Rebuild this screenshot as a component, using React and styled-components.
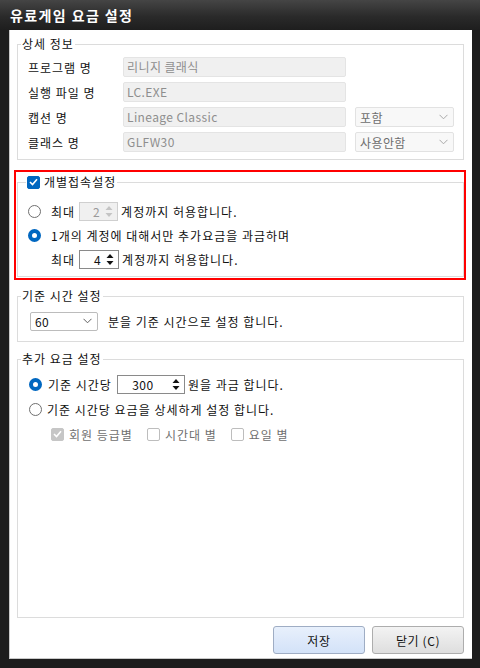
import React from 'react'
import styled, { createGlobalStyle } from 'styled-components'

const GlobalStyle = createGlobalStyle`
  html, body { margin: 0; padding: 0; background: #1d1d1d; }
  body {
    font-family: "Noto Sans CJK KR", "Noto Sans", sans-serif;
    font-size: 12px;
    letter-spacing: 1px;
    color: #111;
  }
  * { box-sizing: border-box; }
`

const Frame = styled.div`
  width: 480px;
  height: 668px;
  display: flex;
  flex-direction: column;
  background: #1d1d1d;
`

const TitleBar = styled.div`
  height: 30px;
  flex: none;
  display: flex;
  align-items: center;
  padding-left: 10px;
  background: linear-gradient(#454545, #2a2a2a 55%, #1e1e1e);
  color: #fff;
  font-size: 14px;
  font-weight: bold;
  letter-spacing: 1.4px;
`

const Client = styled.div`
  flex: 1;
  margin: 0 8px 9px 9px;
  background: #fff;
  border-left: 1px solid #c9c9c9;
  border-bottom: 1px solid #c9c9c9;
  display: flex;
  flex-direction: column;
  padding: 6px 8px 4px 7px;
`

const Group = styled.fieldset`
  margin: ${p => p.$mt || 0}px 0 0;
  padding: 0;
  min-width: 0;
  border: 1px solid #dcdcdc;
  flex: ${p => (p.$grow ? 1 : 'none')};
  display: block;
`

const Legend = styled.legend`
  margin-left: ${p => p.$ml || 3}px;
  padding: 0 1px;
  line-height: 16px;
  height: 16px;
  display: flex;
  align-items: center;
  gap: 4px;
  color: #111;
`

const Body = styled.div`
  display: flex;
  flex-direction: column;
  gap: ${p => p.$gap}px;
  padding: ${p => p.$pad};
`

const Row = styled.div`
  height: 20px;
  display: flex;
  align-items: center;
  padding-left: ${p => p.$indent || 0}px;
  white-space: nowrap;
`

const Label = styled.span`
  width: 95px;
  flex: none;
`

const Text = styled.span`
  margin-left: ${p => p.$ml || 0}px;
  color: ${p => (p.$dim ? '#707070' : '#111')};
`

const ReadOnly = styled.div`
  width: ${p => p.$w}px;
  height: 20px;
  background: #f0f0f0;
  border: 1px solid #e4e4e4;
  border-radius: 2px;
  color: #8e8e8e;
  padding-left: 3px;
  line-height: 18px;
  letter-spacing: 0.4px;
`

const Combo = styled.div`
  width: ${p => p.$w}px;
  height: ${p => p.$h || 20}px;
  margin-left: ${p => p.$ml || 0}px;
  border: 1px solid ${p => (p.$off ? '#e2e2e2' : '#bcbcbc')};
  border-radius: 2px;
  background: ${p => (p.$off ? '#f8f8f8' : '#fff')};
  color: ${p => (p.$off ? '#6e6e6e' : '#111')};
  display: flex;
  align-items: center;
  justify-content: space-between;
  padding: 0 5px 0 4px;
  letter-spacing: 0.4px;
`

const Spin = styled.div`
  width: ${p => p.$w}px;
  height: 19px;
  margin: 0 3px 0 ${p => p.$ml || 0}px;
  border: 1px solid ${p => (p.$off ? '#cfcfcf' : '#8a8a8a')};
  background: ${p => (p.$off ? '#f0f0f0' : '#fff')};
  color: ${p => (p.$off ? '#9a9a9a' : '#111')};
  display: flex;
  align-items: center;
  padding-right: 4px;
  letter-spacing: 0.4px;
`

const SpinValue = styled.span`
  flex: 1;
  text-align: ${p => p.$align || 'right'};
  padding-right: ${p => p.$pr || 4}px;
`

const Radio = styled.span`
  width: 13px;
  height: 13px;
  flex: none;
  border-radius: 50%;
  margin-right: ${p => p.$mr}px;
  border: ${p => (p.$on ? '4px solid #0067c0' : '1px solid #6f6f6f')};
  background: #fff;
`

const Box = styled.span`
  width: 13px;
  height: 13px;
  flex: none;
  border-radius: 2px;
  display: flex;
  align-items: center;
  justify-content: center;
  background: ${p => (p.$on ? p.$color : '#fff')};
  border: 1px solid ${p => (p.$on ? p.$color : '#bdbdbd')};
`

const CheckItem = styled.span`
  display: flex;
  align-items: center;
  gap: 5px;
  margin-right: 14px;
`

const RedBox = styled.div`
  margin: 10px -2px 0 -3px;
  border: 2px solid #ff0000;
  padding: 2px 0 1px 1px;
`

const Buttons = styled.div`
  display: flex;
  justify-content: flex-end;
  gap: 7px;
  margin-top: 8px;
`

const Button = styled.button`
  width: 92px;
  height: 28px;
  border-radius: 3px;
  font: inherit;
  letter-spacing: 0.6px;
  color: #111;
  border: 1px solid ${p => (p.$primary ? '#9fadc4' : '#adadad')};
  background: ${p =>
    p.$primary
      ? 'linear-gradient(#e8f0fc, #d3e2f8)'
      : 'linear-gradient(#f3f3f3, #dedede)'};
`

const Chevron = ({ color = '#a8a8a8' }) => (
  <svg width="9" height="6" viewBox="0 0 9 6">
    <polyline points="0.5,0.8 4.5,4.8 8.5,0.8" fill="none" stroke={color} strokeWidth="1" />
  </svg>
)

const Arrows = ({ color = '#111' }) => (
  <svg width="8" height="13" viewBox="0 0 8 13">
    <polygon points="4,1 7.5,5 0.5,5" fill={color} />
    <polygon points="4,12 7.5,8 0.5,8" fill={color} />
  </svg>
)

const Tick = () => (
  <svg width="9" height="8" viewBox="0 0 9 8">
    <polyline points="1,4 3.5,6.5 8,1.2" fill="none" stroke="#fff" strokeWidth="1.6" />
  </svg>
)

const App = () => {
  return (
    <Frame>
      <GlobalStyle />
      <TitleBar>유료게임 요금 설정</TitleBar>
      <Client>
        <Group>
          <Legend>상세 정보</Legend>
          <Body $gap={5} $pad="5px 9px 7px 10px">
            <Row>
              <Label>프로그램 명</Label>
              <ReadOnly $w={223}>리니지 클래식</ReadOnly>
            </Row>
            <Row>
              <Label>실행 파일 명</Label>
              <ReadOnly $w={223}>LC.EXE</ReadOnly>
            </Row>
            <Row>
              <Label>캡션 명</Label>
              <ReadOnly $w={223}>Lineage Classic</ReadOnly>
              <Combo $w={99} $ml={9} $off>
                포함 <Chevron />
              </Combo>
            </Row>
            <Row>
              <Label>클래스 명</Label>
              <ReadOnly $w={223}>GLFW30</ReadOnly>
              <Combo $w={99} $ml={9} $off>
                사용안함 <Chevron />
              </Combo>
            </Row>
          </Body>
        </Group>

        <RedBox>
          <Group>
            <Legend $ml={8}>
              <Box $on $color="#0067c0">
                <Tick />
              </Box>
              개별접속설정
            </Legend>
            <Body $gap={4} $pad="11px 9px 7px 10px">
              <Row>
                <Radio $mr={10} />
                <Text>최대</Text>
                <Spin $w={39} $ml={4} $off>
                  <SpinValue $pr={5}>2</SpinValue>
                  <Arrows color="#c4c4c4" />
                </Spin>
                <Text>계정까지 허용합니다.</Text>
              </Row>
              <Row>
                <Radio $mr={10} $on />
                <Text>1개의 계정에 대해서만 추가요금을 과금하며</Text>
              </Row>
              <Row $indent={23}>
                <Text>최대</Text>
                <Spin $w={40} $ml={4}>
                  <SpinValue $pr={5}>4</SpinValue>
                  <Arrows />
                </Spin>
                <Text>계정까지 허용합니다.</Text>
              </Row>
            </Body>
          </Group>
        </RedBox>

        <Group $mt={8}>
          <Legend>기준 시간 설정</Legend>
          <Body $gap={0} $pad="7px 9px 10px 12px">
            <Row>
              <Combo $w={68} $h={19}>
                60 <Chevron color="#606060" />
              </Combo>
              <Text $ml={10}>분을 기준 시간으로 설정 합니다.</Text>
            </Row>
          </Body>
        </Group>

        <Group $mt={9} $grow>
          <Legend>추가 요금 설정</Legend>
          <Body $gap={5} $pad="7px 9px 0 11px">
            <Row>
              <Radio $mr={6} $on />
              <Text>기준 시간당</Text>
              <Spin $w={68} $ml={5}>
                <SpinValue $align="center" $pr={0}>300</SpinValue>
                <Arrows />
              </Spin>
              <Text>원을 과금 합니다.</Text>
            </Row>
            <Row>
              <Radio $mr={5} />
              <Text>기준 시간당 요금을 상세하게 설정 합니다.</Text>
            </Row>
            <Row $indent={22}>
              <CheckItem>
                <Box $on $color="#c6c6c6">
                  <Tick />
                </Box>
                <Text $dim>회원 등급별</Text>
              </CheckItem>
              <CheckItem>
                <Box />
                <Text $dim>시간대 별</Text>
              </CheckItem>
              <CheckItem>
                <Box />
                <Text $dim>요일 별</Text>
              </CheckItem>
            </Row>
          </Body>
        </Group>

        <Buttons>
          <Button $primary>저장</Button>
          <Button>닫기 (C)</Button>
        </Buttons>
      </Client>
    </Frame>
  )
}

export default App
